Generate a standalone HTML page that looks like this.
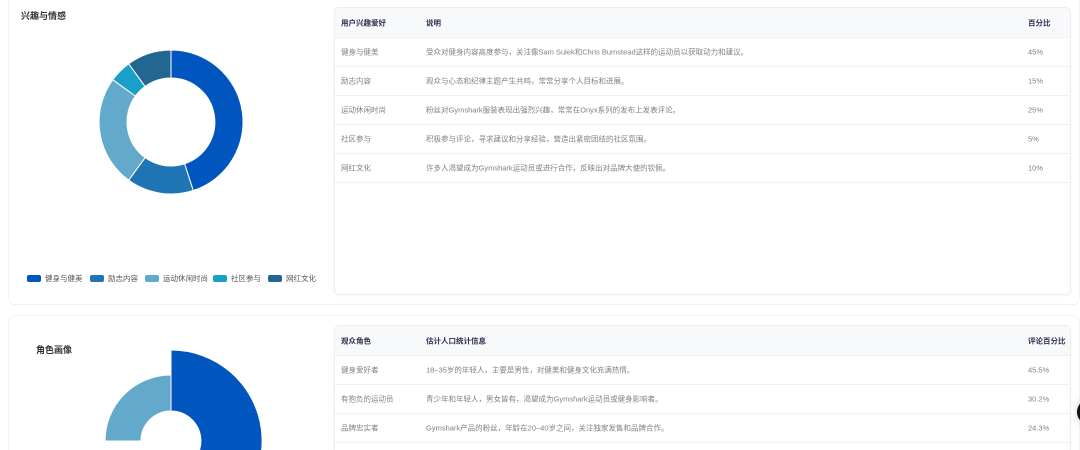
<!DOCTYPE html>
<html><head><meta charset="utf-8"><style>
*{margin:0;padding:0;box-sizing:border-box}
html,body{width:1080px;height:450px;overflow:hidden}
body{background:#fff;font-family:"Liberation Sans","Noto Sans CJK SC",sans-serif;position:relative}
.card{position:absolute;left:8px;width:1072px;border:1px solid #f2f3f5;border-radius:7px;background:#fff}
.title{position:absolute;font-size:9px;font-weight:bold;color:#333}
.tbl{position:absolute;left:334px;width:737px;border:1px solid #eceef2;border-radius:5px;background:#fff;box-shadow:0 1px 2px rgba(0,0,0,.04);overflow:hidden}
.row{height:29px;border-bottom:1px solid #eef0f3;position:relative;font-size:7.5px;color:#808080}
.row.h{height:30px;background:#f8f9fb;color:#2c3350;font-weight:bold}
.row span{position:absolute;top:50%;transform:translateY(-50%);white-space:nowrap}
.c1{left:6px}.c2{left:91px}.c3{left:693px}
.leg{position:absolute;top:273px;font-size:7.5px;color:#555;display:flex;align-items:center;white-space:nowrap}
.leg i{display:inline-block;width:14px;height:7px;border-radius:2px;margin-right:4px}
</style></head><body>
<div class="card" style="top:-6px;height:311px"></div>
<div class="title" style="left:21px;top:9px">兴趣与情感</div>
<svg style="position:absolute;left:0;top:0" width="330" height="300">
<g stroke="#fff" stroke-width="1">
<path d="M171 50 A72 72 0 0 1 193.2 190.5 L184.6 163.8 A44 44 0 0 0 171 78 Z" fill="#0055bf"/>
<path d="M193.2 190.5 A72 72 0 0 1 128.7 180.2 L145.1 157.6 A44 44 0 0 0 184.6 163.8 Z" fill="#1f74b4"/>
<path d="M128.7 180.2 A72 72 0 0 1 112.8 79.7 L135.4 96.1 A44 44 0 0 0 145.1 157.6 Z" fill="#62a9cc"/>
<path d="M112.8 79.7 A72 72 0 0 1 128.7 63.8 L145.1 86.4 A44 44 0 0 0 135.4 96.1 Z" fill="#1aa0c8"/>
<path d="M128.7 63.8 A72 72 0 0 1 171 50 L171 78 A44 44 0 0 0 145.1 86.4 Z" fill="#216790"/>
</g></svg>
<div class="leg" style="left:27px"><i style="background:#0055bf"></i>健身与健美</div>
<div class="leg" style="left:90px"><i style="background:#1f74b4"></i>励志内容</div>
<div class="leg" style="left:145px"><i style="background:#62a9cc"></i>运动休闲时尚</div>
<div class="leg" style="left:213px"><i style="background:#1aa0c8"></i>社区参与</div>
<div class="leg" style="left:268px"><i style="background:#216790"></i>网红文化</div>
<div class="tbl" style="top:7px;height:288px">
<div class="row h"><span class="c1">用户兴趣爱好</span><span class="c2">说明</span><span class="c3">百分比</span></div>
<div class="row"><span class="c1">健身与健美</span><span class="c2">受众对健身内容高度参与，关注像Sam Sulek和Chris Bumstead这样的运动员以获取动力和建议。</span><span class="c3">45%</span></div>
<div class="row"><span class="c1">励志内容</span><span class="c2">观众与心态和纪律主题产生共鸣，常常分享个人目标和进展。</span><span class="c3">15%</span></div>
<div class="row"><span class="c1">运动休闲时尚</span><span class="c2">粉丝对Gymshark服装表现出强烈兴趣，常常在Onyx系列的发布上发表评论。</span><span class="c3">25%</span></div>
<div class="row"><span class="c1">社区参与</span><span class="c2">积极参与评论，寻求建议和分享经验，营造出紧密团结的社区氛围。</span><span class="c3">5%</span></div>
<div class="row"><span class="c1">网红文化</span><span class="c2">许多人渴望成为Gymshark运动员或进行合作，反映出对品牌大使的钦佩。</span><span class="c3">10%</span></div>
</div>
<div class="card" style="top:315px;height:135px;border-bottom:none;border-bottom-left-radius:0;border-bottom-right-radius:0"></div>
<div class="title" style="left:36px;top:343px">角色画像</div>
<svg style="position:absolute;left:0;top:300px" width="330" height="150">
<g stroke="#fff" stroke-width="1">
<path d="M171 50 A91 91 0 0 1 196.1 228.5 L179.3 169.8 A30 30 0 0 0 171 111 Z" fill="#0055bf"/>
<path d="M105 141 A66 66 0 0 1 171 75 L171 111 A30 30 0 0 0 141 141 Z" fill="#62a9cc"/>
</g></svg>
<div class="tbl" style="top:325px;height:125px;border-bottom:none;border-radius:5px 5px 0 0">
<div class="row h"><span class="c1">观众角色</span><span class="c2">估计人口统计信息</span><span class="c3">评论百分比</span></div>
<div class="row"><span class="c1">健身爱好者</span><span class="c2">18–35岁的年轻人，主要是男性，对健美和健身文化充满热情。</span><span class="c3">45.5%</span></div>
<div class="row"><span class="c1">有抱负的运动员</span><span class="c2">青少年和年轻人，男女皆有，渴望成为Gymshark运动员或健身影响者。</span><span class="c3">30.2%</span></div>
<div class="row"><span class="c1">品牌忠实者</span><span class="c2">Gymshark产品的粉丝，年龄在20–40岁之间，关注独家发售和品牌合作。</span><span class="c3">24.3%</span></div>
</div>
<div style="position:absolute;left:1077px;top:399px;width:26px;height:26px;border-radius:50%;background:#111;box-shadow:0 0 8px rgba(0,0,0,.2)"></div>
</body></html>
